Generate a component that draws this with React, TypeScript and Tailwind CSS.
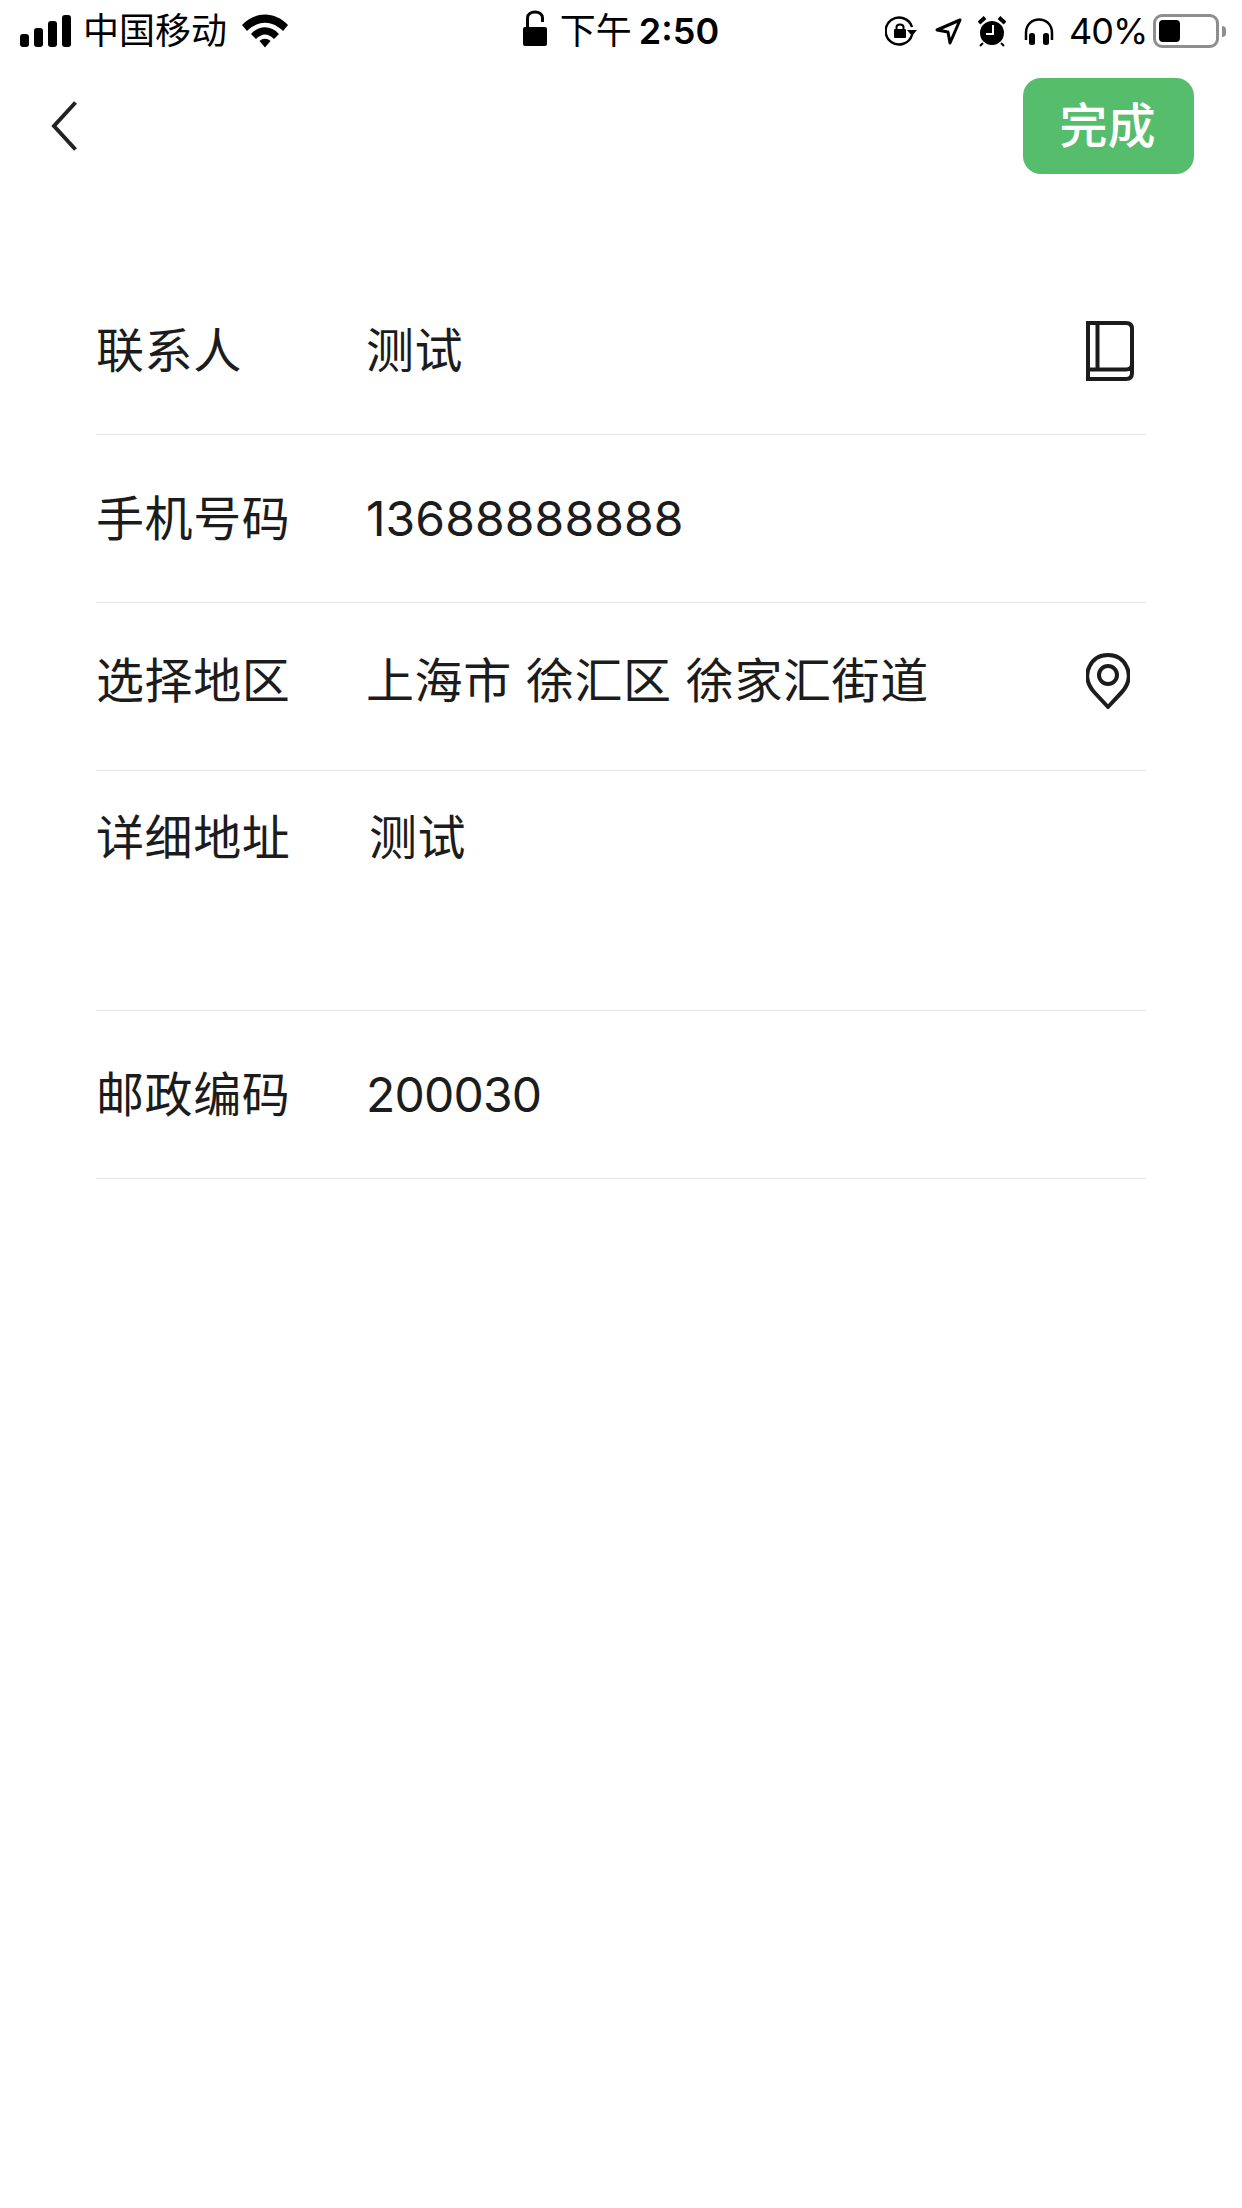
import React from 'react';

const font = "font-['Inter','Noto_Sans_CJK_SC',sans-serif]";

const SignalIcon = () => (
  <svg width="52" height="32" viewBox="0 0 52 32" className="text-black">
    <rect x="0" y="19" width="9" height="13" rx="3" fill="currentColor" />
    <rect x="14" y="13" width="9" height="19" rx="3" fill="currentColor" />
    <rect x="28" y="6" width="9" height="26" rx="3" fill="currentColor" />
    <rect x="42" y="0" width="9" height="32" rx="3" fill="currentColor" />
  </svg>
);

const WifiIcon = () => (
  <svg width="46" height="34" viewBox="0 0 46 34">
    <path d="M0 11 C13 -3 33 -3 46 11 L41 17 C30 6 16 6 5 17 Z" fill="#000" />
    <path d="M9 20 C17 11 29 11 37 20 L32 25 C26 19 20 19 14 25 Z" fill="#000" />
    <path d="M17.5 27 C21 24 25 24 28.5 27 L23 33.5 Z" fill="#000" />
  </svg>
);

const LockIcon = () => (
  <svg width="24" height="36" viewBox="0 0 24 36">
    <path d="M4.5 17 V8 C4.5 0 19.5 0 19.5 8 V12" fill="none" stroke="#000" strokeWidth="3" />
    <rect x="0" y="17" width="24" height="19" rx="2" fill="#000" />
  </svg>
);

const RotationIcon = () => (
  <svg width="32" height="30" viewBox="0 0 32 30">
    <path d="M27 19 A13.5 13.5 0 1 1 27 11" fill="none" stroke="#000" strokeWidth="2.5" />
    <path d="M22 14 H32 L27 20 Z" fill="#000" />
    <rect x="9" y="13" width="12" height="9" rx="1" fill="#000" />
    <path d="M11.5 13 V11 C11.5 7.5 18.5 7.5 18.5 11 V13" fill="none" stroke="#000" strokeWidth="2" />
  </svg>
);

const LocationIcon = () => (
  <svg width="27" height="27" viewBox="0 0 27 27">
    <path d="M25 2 L2 12 L13 14 L15 25 Z" fill="none" stroke="#000" strokeWidth="3" strokeLinejoin="round" />
  </svg>
);

const AlarmIcon = () => (
  <svg width="28" height="31" viewBox="0 0 28 31">
    <circle cx="14" cy="17" r="12" fill="#000" />
    <path d="M1 7 L7 1.5 M27 7 L21 1.5" stroke="#000" strokeWidth="4" />
    <path d="M5 27 L2 30 M23 27 L26 30" stroke="#000" strokeWidth="2" />
    <path d="M15 9 V18 H8" fill="none" stroke="#fff" strokeWidth="2" />
  </svg>
);

const HeadphonesIcon = () => (
  <svg width="30" height="27" viewBox="0 0 30 27">
    <path d="M2 22 V15 C2 -3 28 -3 28 15 V22" fill="none" stroke="#000" strokeWidth="2.5" />
    <rect x="5" y="15" width="6" height="12" rx="2.5" fill="#000" />
    <rect x="19" y="15" width="6" height="12" rx="2.5" fill="#000" />
  </svg>
);

const BatteryIcon = () => (
  <div className="flex items-center gap-[3px]">
    <div className="w-[66px] h-[34px] rounded-[9px] border-[3px] border-[#8e8e8e] p-[3px]">
      <div className="w-[21px] h-full rounded-[4px] bg-black" />
    </div>
    <div className="w-[4px] h-[11px] rounded-r-full bg-[#8e8e8e]" />
  </div>
);

const BookIcon = () => (
  <svg width="48" height="60" viewBox="0 0 48 60" className="text-[#1c1c1c]">
    <path
      d="M2 2 H40 Q46 2 46 8 V52 Q46 58 40 58 H2 Z M2 48.5 H40 Q46 48.5 46 43 M11.5 2 V48.5"
      fill="none"
      stroke="currentColor"
      strokeWidth="4"
    />
  </svg>
);

const PinIcon = () => (
  <svg width="44" height="56" viewBox="0 0 44 56" className="text-[#1c1c1c]">
    <path
      d="M22 54 L8.5 39.5 C-1 29.5 0.5 19 3.5 13.5 C7 6 14 2 22 2 C30 2 37 6 40.5 13.5 C43.5 19 45 29.5 35.5 39.5 Z"
      fill="none"
      stroke="currentColor"
      strokeWidth="4"
      strokeLinejoin="round"
    />
    <circle cx="22" cy="22" r="9" fill="none" stroke="currentColor" strokeWidth="4" />
  </svg>
);

const rows = [
  { label: '联系人', value: '测试', icon: <BookIcon />, cls: 'h-[168px] items-center' },
  { label: '手机号码', value: '13688888888', cls: 'h-[168px] items-center', valueCls: 'tracking-[0.1px]' },
  { label: '选择地区', value: '上海市 徐汇区 徐家汇街道', icon: <PinIcon />, cls: 'h-[168px] items-center pb-[12px]', iconCls: 'ml-[2px]' },
  { label: '详细地址', value: '测试', cls: 'h-[240px] items-start pt-[37px]', valueCls: 'pl-[3px]' },
  { label: '邮政编码', value: '200030', cls: 'h-[168px] items-center', valueCls: 'tracking-[-0.8px]' },
];

export default function App() {
  return (
    <div className={`w-[1242px] h-[2208px] bg-white ${font} text-[#1c1c1c]`}>
      <div className="h-[60px] pl-[20px] pr-[16px] pt-[2px] grid grid-cols-3 items-center text-black text-[36px] leading-[44px]">
        <div className="flex items-center">
          <SignalIcon />
          <span className="ml-[11px]">中国移动</span>
          <span className="ml-[15px]"><WifiIcon /></span>
        </div>
        <div className="flex items-center justify-center ml-[-4px]">
          <span className="-mt-[6px]"><LockIcon /></span>
          <span className="ml-[13px]">下午</span>
          <span className="ml-[7px] font-semibold">2:50</span>
        </div>
        <div className="flex items-center justify-end">
          <RotationIcon />
          <span className="ml-[18px]"><LocationIcon /></span>
          <span className="ml-[16px]"><AlarmIcon /></span>
          <span className="ml-[18px]"><HeadphonesIcon /></span>
          <span className="ml-[15px] w-[76px] whitespace-nowrap tracking-[-1px]">40%</span>
          <span className="ml-[8px]"><BatteryIcon /></span>
        </div>
      </div>

      <div className="flex items-center justify-between pt-[18px] pl-[51px] pr-[48px]">
        <svg width="26" height="50" viewBox="0 0 26 50" className="text-[#222]">
          <path d="M24.5 1.5 L3 25 L24.5 48.5" fill="none" stroke="currentColor" strokeWidth="4" />
        </svg>
        <button className="w-[171px] h-[96px] pr-[2px] rounded-[18px] bg-[#56bd6d] text-white text-[48px] leading-none font-medium">
          完成
        </button>
      </div>

      <div className="mt-[93px] mx-[96px] w-[1050px]">
        {rows.map((row) => (
          <div key={row.label} className={`flex border-b border-[#e8e8e8] text-[48px] leading-[60px] tracking-[0.6px] ${row.cls}`}>
            <div className="w-[270px] shrink-0">{row.label}</div>
            <div className={`flex-1 ${row.valueCls ?? ''}`}>{row.value}</div>
            {row.icon && <div className={`w-[60px] flex justify-start ${row.iconCls ?? '-ml-[2px]'}`}>{row.icon}</div>}
          </div>
        ))}
      </div>
    </div>
  );
}
